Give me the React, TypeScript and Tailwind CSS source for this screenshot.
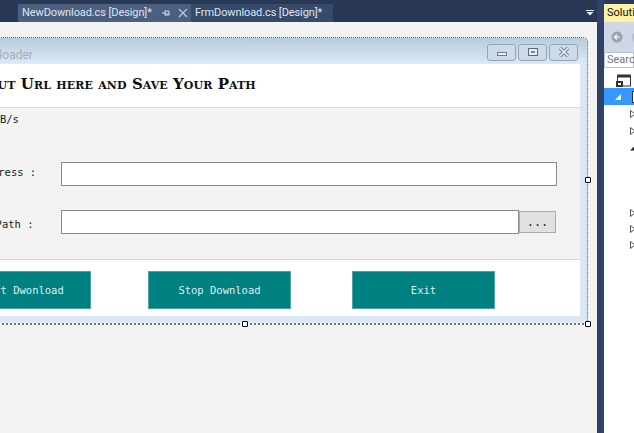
const sans = "font-['Roboto','Noto_Sans',sans-serif]";
const mono = "font-['DejaVu_Sans_Mono',monospace]";

function TealButton({ label, className }: { label: string; className: string }) {
  return (
    <div className={`h-[38px] w-[143px] shrink-0 flex items-center justify-center pt-[1px] bg-[#008080] border border-[#4ba3a8] text-[#dfeeee] text-[10.5px] ${mono} ${className}`}>
      {label}
    </div>
  );
}

function Handle({ className }: { className: string }) {
  return <div className={`absolute w-[6px] h-[6px] bg-white border border-black rounded-[1px] ${className}`} />;
}

function CaptionButton({ kind }: { kind: "min" | "max" | "close" }) {
  return (
    <div className="h-[17px] w-[29px] rounded-[3px] border border-[#93a6b8] bg-[#cddbe9] flex items-center justify-center">
      <svg width="14" height="10" viewBox="0 0 14 10">
        {kind === "min" && <rect x="2.5" y="5.5" width="9" height="3" fill="#eef2f5" stroke="#6d7a86" strokeWidth="1" />}
        {kind === "max" && (
          <>
            <rect x="2.5" y="1.5" width="9" height="7" fill="#e8edf2" stroke="#5c6874" />
            <rect x="5" y="4" width="4" height="2" fill="#7a8692" />
          </>
        )}
        {kind === "close" && (
          <>
            <path d="M3 1 L11 9 M11 1 L3 9" stroke="#6d7a86" strokeWidth="3.4" fill="none" />
            <path d="M3 1 L11 9 M11 1 L3 9" stroke="#eef2f5" strokeWidth="1.6" fill="none" />
          </>
        )}
      </svg>
    </div>
  );
}

function Tri({ filled, ml }: { filled?: boolean; ml: string }) {
  return (
    <svg width="6" height="8" viewBox="0 0 6 8" className={`shrink-0 ${ml}`}>
      {filled ? (
        <path d="M5.5 1 V6.5 H0 Z" fill="#222" />
      ) : (
        <path d="M0.5 0.5 L5 4 L0.5 7.5 Z" fill="#fff" stroke="#555" />
      )}
    </svg>
  );
}

function TreeRow({ h, filled }: { h: string; filled?: boolean }) {
  return (
    <div className={`flex items-center ${h}`}>
      <Tri filled={filled} ml="ml-[26px]" />
    </div>
  );
}

export default function App() {
  return (
    <div className="w-[634px] h-[433px] overflow-hidden flex bg-[#293955]">
      <div className="w-[597px] shrink-0 flex flex-col">
        <div className={`h-[22px] shrink-0 pt-[4px] flex bg-[#293955] text-[11px] tracking-[-0.1px] leading-[18px] ${sans}`}>
          <div className="w-[18px] shrink-0" />
          <div className="w-[173px] shrink-0 bg-[#4b5f80] text-[#dfe5ee] flex items-center pl-[4px]">
            <span className="whitespace-nowrap">NewDownload.cs [Design]*</span>
            <svg width="10" height="10" viewBox="0 0 10 10" className="ml-[9px] shrink-0">
              <path d="M1 5 H4 M4 2.5 V7.5 M4 3 H8 V7 H4 M4 6 H8" stroke="#d5dce8" fill="none" />
            </svg>
            <svg width="10" height="10" viewBox="0 0 10 10" className="ml-[7px] shrink-0">
              <path d="M1 1 L9 9 M9 1 L1 9" stroke="#b9c4d6" strokeWidth="1.4" fill="none" />
            </svg>
          </div>
          <div className="w-[142px] shrink-0 bg-[#364a6c] text-[#dfe5ee] flex items-center pl-[4px]">
            <span className="whitespace-nowrap">FrmDownload.cs [Design]*</span>
          </div>
          <div className="flex-1 flex items-center justify-end pr-[2px]">
            <svg width="8" height="6" viewBox="0 0 8 6" className="mr-[1px]">
              <rect x="0" y="0" width="8" height="1" fill="#e8edf4" />
              <path d="M0.5 2 H7.5 L4 5.5 Z" fill="#e8edf4" />
            </svg>
          </div>
        </div>

        <div className="flex-1 bg-[#f3f3f3] overflow-hidden pt-[15px]">
          <div className="relative ml-[-75px] w-[663px] h-[288px] border border-dotted border-[#555] rounded-tr-[5px] border-b-2 border-b-[#777]">
            <div className="h-full flex flex-col bg-[#dbe7f4] rounded-tr-[5px] pl-[6px] pr-[7px] pb-[7px]">
              <div className="h-[26px] shrink-0 -ml-[6px] -mr-[7px] pl-[6px] pr-[7px] rounded-tr-[5px] bg-gradient-to-b from-[#b8cbdd] to-[#dde9f6] flex items-center">
                <span className={`ml-[37px] mt-[8px] text-[12px] text-[#a4aeb8] ${sans}`}>Downloader</span>
                <div className="ml-auto flex items-center gap-[2px] mr-[2px] mt-[2px]">
                  <CaptionButton kind="min" />
                  <CaptionButton kind="max" />
                  <CaptionButton kind="close" />
                </div>
              </div>

              <div className="flex-1 flex flex-col bg-white">
                <div className="h-[41px] shrink-0 flex items-center pl-[40px]">
                  <span className="font-['DejaVu_Serif',serif] font-bold text-[15px] tracking-[0.08px] [font-variant:small-caps] text-[#111] whitespace-nowrap">
                    Input Url here and Save Your Path
                  </span>
                </div>
                <div className={`h-[153px] shrink-0 mt-[2px] bg-[#f3f3f3] border-y border-[#d8d8d8] text-[10.5px] text-[#222] ${mono}`}>
                  <div className="pl-[49px] pt-[4px] h-[54px]">0 KB/s</div>
                  <div className="flex items-center h-[24px]">
                    <div className="w-[129px] shrink-0 pl-[22px] mb-[2px]">Url Address :</div>
                    <div className="w-[496px] h-[24px] bg-white border border-[#8a8a8a]" />
                  </div>
                  <div className="flex items-center h-[24px] mt-[24px]">
                    <div className="w-[129px] shrink-0 pl-[32px] mt-[6px]">Save Path :</div>
                    <div className="w-[458px] h-[24px] bg-white border border-[#8a8a8a]" />
                    <div className="w-[37px] h-[22px] bg-[#e1e1e1] border border-[#adadad] flex items-center justify-center text-[12px]">...</div>
                  </div>
                </div>
                <div className="flex-1 flex items-start pt-[11px] pl-[16px]">
                  <TealButton label="Start Dwonload" className="" />
                  <TealButton label="Stop Download" className="ml-[57px]" />
                  <TealButton label="Exit" className="ml-[61px]" />
                </div>
              </div>
            </div>
            <Handle className="right-[-4px] top-[139px]" />
            <Handle className="left-[316px] bottom-[-4px]" />
            <Handle className="right-[-4px] bottom-[-4px]" />
          </div>
        </div>
      </div>

      <div className="w-[7px] shrink-0 bg-[#2f4368]" />

      <div className="flex-1 min-w-0 flex flex-col pt-[4px] overflow-hidden">
        <div className={`h-[18px] shrink-0 bg-[#fff0a8] text-[11px] leading-[18px] pl-[3px] text-[#111] whitespace-nowrap ${sans}`}>Solution Explorer</div>
        <div className="h-[30px] shrink-0 bg-[#cfd6e5] flex items-center pl-[7px] gap-[9px]">
          <svg width="12" height="12" viewBox="0 0 12 12" className="shrink-0">
            <circle cx="6" cy="6" r="5.5" fill="#9aa3ad" />
            <path d="M8.5 6 H4 M6 3.5 L3.5 6 L6 8.5" stroke="#eef0f3" strokeWidth="1.4" fill="none" />
          </svg>
          <div className="w-[12px] h-[12px] shrink-0 rounded-full bg-[#b4bcc7]" />
        </div>
        <div className={`h-[16px] shrink-0 bg-white border border-[#b8c2d4] text-[11px] leading-[14px] pl-[2px] text-[#777] whitespace-nowrap ${sans}`}>Search Solution</div>
        <div className="flex-1 bg-white flex flex-col pt-[5px]">
          <div className="h-[15px] flex items-center pl-[12px]">
            <svg width="16" height="14" viewBox="0 0 16 14">
              <rect x="1.5" y="1" width="13" height="11" fill="#fff" stroke="#333" />
              <rect x="1.5" y="1" width="13" height="2.5" fill="#333" />
              <rect x="0" y="7" width="7" height="6" fill="#333" />
              <rect x="2" y="9" width="3" height="2" fill="#fff" />
            </svg>
          </div>
          <div className="h-[17px] bg-[#3399ff] flex items-center pl-[11px]">
            <svg width="6" height="6" viewBox="0 0 6 6" className="shrink-0"><path d="M6 0 V6 H0 Z" fill="#fff" /></svg>
            <div className="ml-[11px] w-[8px] h-[12px] border border-[#333] bg-white shrink-0" />
          </div>
          <TreeRow h="h-[17px]" />
          <TreeRow h="h-[17px]" />
          <TreeRow h="h-[17px]" filled />
          <div className="h-[48px]" />
          <TreeRow h="h-[17px]" />
          <TreeRow h="h-[16px]" />
          <TreeRow h="h-[16px]" />
        </div>
      </div>
    </div>
  );
}
